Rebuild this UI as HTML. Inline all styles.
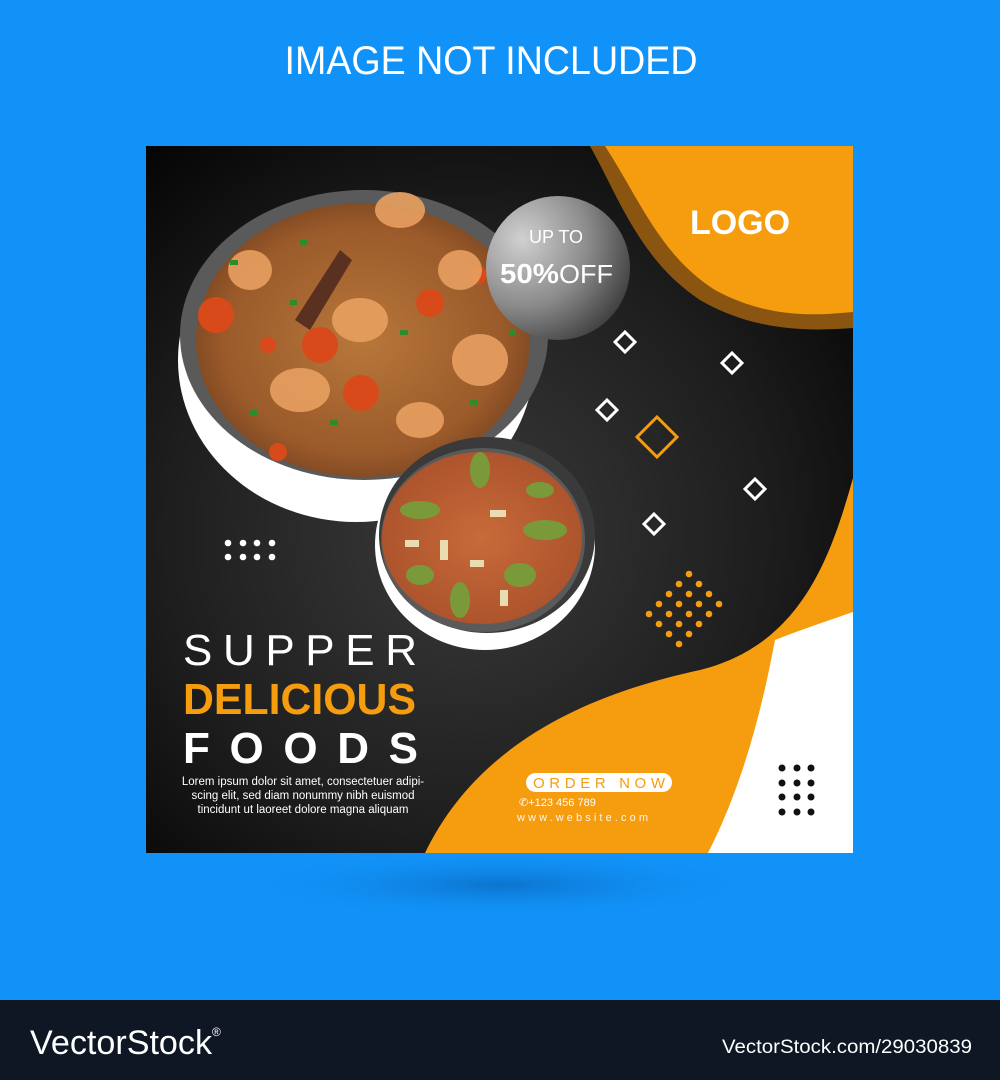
<!DOCTYPE html>
<html><head><meta charset="utf-8"><style>html,body{margin:0;padding:0;background:#1192f8}svg{display:block}</style></head><body>
<svg width="1000" height="1080" viewBox="0 0 1000 1080" xmlns="http://www.w3.org/2000/svg" font-family="Liberation Sans, sans-serif">
<defs>
<radialGradient id="bg" cx="0.45" cy="0.55" r="0.7"><stop offset="0" stop-color="#3a3a3a"/><stop offset="0.6" stop-color="#1e1e1e"/><stop offset="1" stop-color="#050505"/></radialGradient>
<radialGradient id="disc" cx="0.25" cy="0.3" r="0.85"><stop offset="0" stop-color="#d0d0d0"/><stop offset="0.55" stop-color="#8a8a8a"/><stop offset="1" stop-color="#3a3a3a"/></radialGradient>
<radialGradient id="pasta" cx="0.5" cy="0.5" r="0.6"><stop offset="0" stop-color="#b8773a"/><stop offset="0.7" stop-color="#9a5a2a"/><stop offset="1" stop-color="#6a3a1c"/></radialGradient>
<radialGradient id="salad" cx="0.5" cy="0.5" r="0.6"><stop offset="0" stop-color="#c86a3a"/><stop offset="1" stop-color="#a8502a"/></radialGradient>
<radialGradient id="shadow" cx="0.5" cy="0.5" r="0.5"><stop offset="0" stop-color="#0a60b0" stop-opacity="0.6"/><stop offset="1" stop-color="#1192f8" stop-opacity="0"/></radialGradient>
<clipPath id="card"><rect x="146" y="146" width="707" height="707"/></clipPath>
</defs>
<rect width="1000" height="1080" fill="#1192f8"/>
<text x="491" y="74" fill="#fff" font-size="40" text-anchor="middle" textLength="413" lengthAdjust="spacingAndGlyphs">IMAGE NOT INCLUDED</text>
<ellipse cx="500" cy="885" rx="270" ry="35" fill="url(#shadow)"/>
<g clip-path="url(#card)">
<rect x="146" y="146" width="707" height="707" fill="url(#bg)"/>
<path d="M590 146 C620 200 640 260 700 300 C760 335 820 330 853 328 L853 146 Z" fill="#8a5510"/>
<path d="M605 146 C640 200 660 255 715 290 C770 320 820 315 853 312 L853 146 Z" fill="#f59c0f"/>
<path d="M425 853 C470 760 560 700 700 670 C800 645 830 560 853 478 L853 853 Z" fill="#f59c0f"/>
<path d="M708 853 C740 790 760 720 775 640 C800 630 830 620 853 612 L853 853 Z" fill="#fff"/>
<!-- big plate -->
<ellipse cx="356" cy="360" rx="178" ry="162" fill="#fff"/>
<ellipse cx="364" cy="335" rx="184" ry="145" fill="#5a5a5a"/>
<ellipse cx="363" cy="340" rx="167" ry="137" fill="url(#pasta)"/>
<g fill="#d84a1a"><circle cx="216" cy="315" r="18"/><circle cx="320" cy="345" r="18"/><circle cx="361" cy="393" r="18"/><circle cx="430" cy="303" r="14"/><circle cx="268" cy="345" r="8"/><circle cx="278" cy="452" r="9"/><circle cx="478" cy="275" r="9"/></g>
<g fill="#e8a060" opacity="0.9"><ellipse cx="400" cy="210" rx="25" ry="18"/><ellipse cx="460" cy="270" rx="22" ry="20"/><ellipse cx="360" cy="320" rx="28" ry="22"/><ellipse cx="300" cy="390" rx="30" ry="22"/><ellipse cx="480" cy="360" rx="28" ry="26"/><ellipse cx="420" cy="420" rx="24" ry="18"/><ellipse cx="250" cy="270" rx="22" ry="20"/></g>
<g fill="#2f8a2a"><rect x="230" y="260" width="8" height="5"/><rect x="290" y="300" width="7" height="5"/><rect x="400" y="330" width="8" height="5"/><rect x="330" y="420" width="8" height="5"/><rect x="250" y="410" width="7" height="5"/><rect x="470" y="400" width="7" height="5"/><rect x="510" y="330" width="6" height="5"/><rect x="300" y="240" width="7" height="5"/></g>
<path d="M295 320 L340 250 L352 260 L310 330 Z" fill="#5a3020"/>
<!-- small plate -->
<ellipse cx="485" cy="545" rx="110" ry="105" fill="#fff"/>
<ellipse cx="487" cy="535" rx="108" ry="98" fill="#3a3a3a"/>
<ellipse cx="483" cy="540" rx="102" ry="92" fill="#5a5a5a"/>
<ellipse cx="482" cy="538" rx="100" ry="86" fill="url(#salad)"/>
<g fill="#7a9a3a"><ellipse cx="420" cy="510" rx="20" ry="9"/><ellipse cx="480" cy="470" rx="10" ry="18"/><ellipse cx="545" cy="530" rx="22" ry="10"/><ellipse cx="520" cy="575" rx="16" ry="12"/><ellipse cx="460" cy="600" rx="10" ry="18"/><ellipse cx="420" cy="575" rx="14" ry="10"/><ellipse cx="540" cy="490" rx="14" ry="8"/></g>
<g fill="#e8dcb0"><rect x="440" y="540" width="8" height="20"/><rect x="490" y="510" width="16" height="7"/><rect x="405" y="540" width="14" height="7"/><rect x="500" y="590" width="8" height="16"/><rect x="470" y="560" width="14" height="7"/></g>
<!-- discount -->
<circle cx="558" cy="268" r="72" fill="url(#disc)"/>
<text x="556" y="243" fill="#fff" font-size="18" text-anchor="middle">UP TO</text>
<text x="500" y="283" fill="#fff" font-size="28" font-weight="bold" textLength="59" lengthAdjust="spacingAndGlyphs">50%</text>
<text x="559" y="283" fill="#fff" font-size="26" textLength="54" lengthAdjust="spacingAndGlyphs">OFF</text>
<text x="740" y="234" fill="#fff" font-size="34" font-weight="bold" text-anchor="middle">LOGO</text>
<!-- diamonds -->
<g fill="none" stroke="#fff" stroke-width="3">
<path d="M625 332 l10 10 l-10 10 l-10 -10 Z"/>
<path d="M732 353 l10 10 l-10 10 l-10 -10 Z"/>
<path d="M607 400 l10 10 l-10 10 l-10 -10 Z"/>
<path d="M755 479 l10 10 l-10 10 l-10 -10 Z"/>
<path d="M654 514 l10 10 l-10 10 l-10 -10 Z"/>
</g>
<path d="M657 417 l20 20 l-20 20 l-20 -20 Z" fill="none" stroke="#f59c0f" stroke-width="3"/>
<g fill="#f59c0f">
<circle cx="689" cy="574" r="3.3"/><circle cx="679" cy="584" r="3.3"/><circle cx="699" cy="584" r="3.3"/><circle cx="669" cy="594" r="3.3"/><circle cx="689" cy="594" r="3.3"/><circle cx="709" cy="594" r="3.3"/><circle cx="659" cy="604" r="3.3"/><circle cx="679" cy="604" r="3.3"/><circle cx="699" cy="604" r="3.3"/><circle cx="719" cy="604" r="3.3"/><circle cx="649" cy="614" r="3.3"/><circle cx="669" cy="614" r="3.3"/><circle cx="689" cy="614" r="3.3"/><circle cx="709" cy="614" r="3.3"/><circle cx="659" cy="624" r="3.3"/><circle cx="679" cy="624" r="3.3"/><circle cx="699" cy="624" r="3.3"/><circle cx="669" cy="634" r="3.3"/><circle cx="689" cy="634" r="3.3"/><circle cx="679" cy="644" r="3.3"/>
</g>
<g fill="#fff"><circle cx="228" cy="543" r="3.3"/><circle cx="243" cy="543" r="3.3"/><circle cx="257" cy="543" r="3.3"/><circle cx="272" cy="543" r="3.3"/><circle cx="228" cy="557" r="3.3"/><circle cx="243" cy="557" r="3.3"/><circle cx="257" cy="557" r="3.3"/><circle cx="272" cy="557" r="3.3"/></g>
<g fill="#111"><circle cx="782" cy="768" r="3.5"/><circle cx="797" cy="768" r="3.5"/><circle cx="811" cy="768" r="3.5"/><circle cx="782" cy="783" r="3.5"/><circle cx="797" cy="783" r="3.5"/><circle cx="811" cy="783" r="3.5"/><circle cx="782" cy="797" r="3.5"/><circle cx="797" cy="797" r="3.5"/><circle cx="811" cy="797" r="3.5"/><circle cx="782" cy="812" r="3.5"/><circle cx="797" cy="812" r="3.5"/><circle cx="811" cy="812" r="3.5"/></g>
<text x="183" y="665" fill="#fff" font-size="44" textLength="234" lengthAdjust="spacing">SUPPER</text>
<text x="183" y="714" fill="#f59c0f" font-size="44" font-weight="bold" textLength="233" lengthAdjust="spacingAndGlyphs">DELICIOUS</text>
<text x="183" y="763" fill="#fff" font-size="44" font-weight="bold" textLength="235" lengthAdjust="spacing">FOODS</text>
<g fill="#fff" font-size="11.5" text-anchor="middle">
<text x="303" y="785">Lorem ipsum dolor sit amet, consectetuer adipi-</text>
<text x="303" y="799">scing elit, sed diam nonummy nibh euismod</text>
<text x="303" y="813">tincidunt ut laoreet dolore magna aliquam</text>
</g>
<rect x="526" y="773" width="146" height="19" rx="9.5" fill="#fff"/>
<text x="599" y="788" fill="#f59c0f" font-size="15" text-anchor="middle" textLength="132" lengthAdjust="spacing">ORDER NOW</text>
<text x="519" y="806" fill="#fff" font-size="11">✆+123 456 789</text>
<text x="517" y="821" fill="#fff" font-size="11" textLength="131" lengthAdjust="spacing" opacity="0.9">www.website.com</text>
</g>
<rect x="0" y="1000" width="1000" height="80" fill="#0f1724"/>
<text x="30" y="1054" fill="#fff" font-size="34" textLength="182" lengthAdjust="spacingAndGlyphs">VectorStock</text>
<text x="212" y="1036" fill="#fff" font-size="12">®</text>
<text x="972" y="1053" fill="#fff" font-size="19" text-anchor="end" textLength="250" lengthAdjust="spacingAndGlyphs">VectorStock.com/29030839</text>
</svg>
</body></html>
